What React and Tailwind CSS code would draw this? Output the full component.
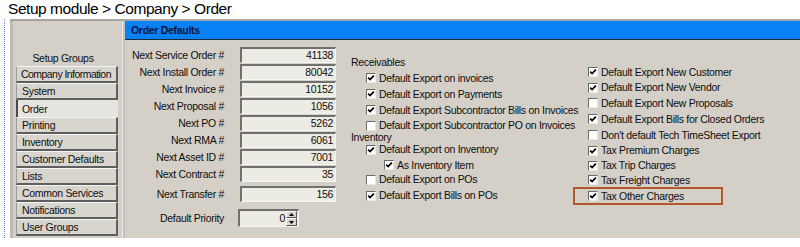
import React from "react";

function Cb({ checked }) {
  return (
    <span className="w-[10px] h-[10px] shrink-0 bg-white border border-t-[#6a6a6a] border-l-[#6a6a6a] border-b-[#e8e8e8] border-r-[#e8e8e8] flex items-center justify-center">
      {checked && (
        <svg width="8" height="8" viewBox="0 0 8 8">
          <path d="M1.2 3.6 L3.1 5.6 L6.9 1.6" stroke="#000" strokeWidth="1.7" fill="none" />
        </svg>
      )}
    </span>
  );
}

function CbRow({ checked, label, h, indent = "pl-[15px]" }) {
  return (
    <div className={`flex items-center gap-[3px] ${indent} ${h}`}>
      <Cb checked={checked} />
      <span className="whitespace-nowrap">{label}</span>
    </div>
  );
}

function NumRow({ label, value, h = "h-[17px]", extra = "" }) {
  return (
    <div className={`grid grid-cols-[99px_96px] gap-x-[16px] ${h} ${extra}`}>
      <div className="flex items-center justify-end whitespace-nowrap">{label}</div>
      <div className="h-[16px] bg-[#ecebe4] border-t-2 border-l-2 border-b border-r border-t-[#707070] border-l-[#707070] border-b-[#f6f6f2] border-r-[#f6f6f2] flex items-center justify-end pr-[2px]">
        {value}
      </div>
    </div>
  );
}

const groups = [
  "Company Information",
  "System",
  "Order",
  "Printing",
  "Inventory",
  "Customer Defaults",
  "Lists",
  "Common Services",
  "Notifications",
  "User Groups",
];

export default function App() {
  return (
    <div className="w-[800px] h-[247px] bg-white font-['Liberation_Sans',Arial,sans-serif] text-[#0e0e0e] overflow-hidden">
      <div className="h-[19px] pl-[8px] text-[15.5px] leading-[18px] tracking-[-0.45px] text-black">
        Setup module &gt; Company &gt; Order
      </div>
      <div className="flex h-[219px] text-[10.5px] tracking-[-0.3px] leading-none">
        <div className="w-[10px] flex">
          <div className="ml-[4px] w-0 border-l border-dotted border-[#5d86d8]" />
        </div>
        <div className="flex-1 flex bg-[#d4d0c8] border-t-2 border-[#a8a6a0]">
          {/* Left panel */}
          <div className="w-[112px] border-l-[3px] border-l-[#bdbab3] pl-[3px] pr-[4px] flex flex-col">
            <div className="h-[45px] flex items-end justify-center pb-[3px] pr-[8px]">Setup Groups</div>
            <div className="flex flex-col">
              {groups.map((g) =>
                g === "Order" ? (
                  <div
                    key={g}
                    className="h-[17px] bg-[#e6e4de] border-l-2 border-[#4a4a4a] pl-[4px] flex items-center pt-[2px]"
                  >
                    {g}
                  </div>
                ) : (
                  <div
                    key={g}
                    className={`h-[17px] bg-[#d8d5cf] border-t border-l border-t-[#f4f4f2] border-l-[#9c9c9c] border-r-2 border-b-2 border-r-[#5e5e5e] border-b-[#5e5e5e] flex items-center pt-[1px] whitespace-nowrap overflow-hidden ${
                      g === "Company Information" ? "pl-[4px] tracking-[-0.55px]" : "pl-[5px]"
                    }`}
                  >
                    {g}
                  </div>
                )
              )}
            </div>
          </div>
          {/* Separator */}
          <div className="w-[3px] bg-[#c4c1ba] border-l border-[#eeece8]" />
          {/* Right panel */}
          <div className="flex-1 flex flex-col">
            <div className="h-[19px] bg-[#0880f6] border-b border-[#1c2a3c] flex items-center pl-[6px] font-bold text-[#0c1430]">
              Order Defaults
            </div>
            <div className="flex flex-1">
              {/* numbers */}
              <div className="flex flex-col pt-[7px]">
                <NumRow label="Next Service Order #" value="41138" />
                <NumRow label="Next Install Order #" value="80042" />
                <NumRow label="Next Invoice #" value="10152" />
                <NumRow label="Next Proposal #" value="1056" />
                <NumRow label="Next PO #" value="5262" />
                <NumRow label="Next RMA #" value="6061" />
                <NumRow label="Next Asset ID #" value="7001" />
                <NumRow label="Next Contract #" value="35" />
                <NumRow label="Next Transfer #" value="156" extra="mt-[3px]" />
                <div className="grid grid-cols-[99px_96px] gap-x-[14px] h-[18px] mt-[6px]">
                  <div className="flex items-center justify-end whitespace-nowrap">Default Priority</div>
                  <div className="w-[61px] h-[18px] bg-[#ecebe4] border-t-2 border-l-2 border-b border-r border-t-[#707070] border-l-[#707070] border-b-[#f6f6f2] border-r-[#f6f6f2] flex items-center justify-end pr-[1px] gap-[1px]">
                    <span>0</span>
                    <div className="w-[11px] h-[15px] flex flex-col">
                      <div className="h-[7px] bg-[#d8d5cf] border-t border-l border-t-white border-l-white border-b border-r border-b-[#555] border-r-[#555] flex items-center justify-center">
                        <svg width="5" height="3" viewBox="0 0 5 3"><path d="M2.5 0 L5 3 L0 3 Z" fill="#000" /></svg>
                      </div>
                      <div className="h-[8px] bg-[#d8d5cf] border-t border-l border-t-white border-l-white border-b border-r border-b-[#555] border-r-[#555] flex items-center justify-center">
                        <svg width="5" height="3" viewBox="0 0 5 3"><path d="M0 0 L5 0 L2.5 3 Z" fill="#000" /></svg>
                      </div>
                    </div>
                  </div>
                </div>
              </div>
              {/* middle column */}
              <div className="w-[222px] ml-[15px] flex flex-col pt-[14px]">
                <div className="h-[16px] flex items-center">Receivables</div>
                <CbRow checked label="Default Export on invoices" h="h-[16px]" />
                <CbRow checked label="Default Export on Payments" h="h-[16px]" />
                <CbRow checked label="Default Export Subcontractor Bills on Invoices" h="h-[16px]" />
                <CbRow checked={false} label="Default Export Subcontractor PO on Invoices" h="h-[15px]" />
                <div className="h-[9px] flex items-center">Inventory</div>
                <CbRow checked label="Default Export on Inventory" h="h-[15px]" />
                <CbRow checked label="As Inventory Item" h="h-[16px]" indent="pl-[33px]" />
                <CbRow checked={false} label="Default Export on POs" h="h-[13px]" />
                <CbRow checked label="Default Export Bills on POs" h="h-[19px]" />
              </div>
              {/* right column */}
              <div className="flex flex-col pt-[24px]">
                <CbRow checked label="Default Export New Customer" h="h-[16px]" />
                <CbRow checked label="Default Export New Vendor" h="h-[15px]" />
                <CbRow checked={false} label="Default Export New Proposals" h="h-[16px]" />
                <CbRow checked label="Default Export Bills for Closed Orders" h="h-[16px]" />
                <CbRow checked={false} label="Don't default Tech TimeSheet Export" h="h-[16px]" />
                <CbRow checked label="Tax Premium Charges" h="h-[15px]" />
                <CbRow checked label="Tax Trip Charges" h="h-[15px]" />
                <CbRow checked label="Tax Freight Charges" h="h-[14px]" />
                <div className="w-[150px] h-[18px] border-2 border-[#b3582c] flex items-center gap-[3px] pl-[13px]">
                  <Cb checked />
                  <span className="whitespace-nowrap">Tax Other Charges</span>
                </div>
              </div>
            </div>
          </div>
        </div>
      </div>
    </div>
  );
}
